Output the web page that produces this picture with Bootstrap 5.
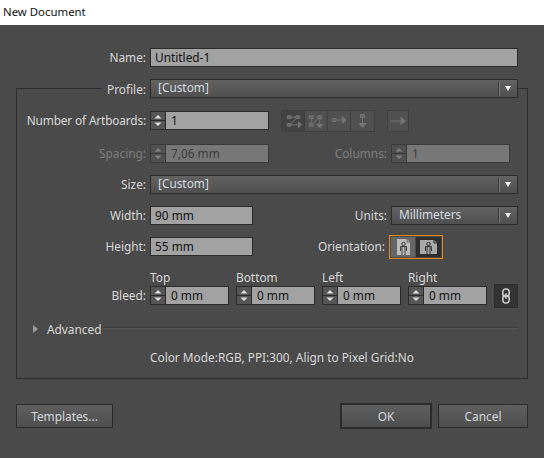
<!DOCTYPE html>
<html lang="en">
<head>
<meta charset="utf-8">
<title>New Document</title>
<link rel="stylesheet" href="https://cdn.jsdelivr.net/npm/bootstrap@5.3.0/dist/css/bootstrap.min.css">
<style>
html,body{height:100%}
body{background:#4a4a4a;color:#d8d8d8;font:11.85px/15px "Noto Sans",sans-serif;overflow:hidden}
.titlebar{height:25px;background:#fff;color:#111;padding:4px 3px;font-size:11.4px}
.dlg{padding:23px 16px 0}
.fr{height:19px;gap:0}
.fld-name{width:130px;margin-right:4px;text-align:right;flex:none;line-height:19px}
.frame-box{border:1px solid #2d2d2d;margin-top:21px;padding:0 9px 12px 0;height:291px}
.prof-row{margin-top:-10px;margin-left:85px;background:#4a4a4a}
.prof-row .fld-name{width:44px;margin-right:4px;line-height:20px}
.frame-box .body-name{width:129px;margin-right:4px;text-align:right;flex:none;line-height:19px}
.tight{letter-spacing:-.15px}
.mt13{margin-top:13px}.mt14{margin-top:14px}.mt12{margin-top:12px}.mt1px{margin-top:1px}.mt15{margin-top:15px}
.field-box{height:19px;border:1px solid #2b2b2b;background:#a2a2a2;color:#111;border-radius:0;padding:0 4px;line-height:17px;flex:none;min-height:0}
.me10{margin-right:10px}
.w103{width:103px}
.w119{width:119px}
.w127{width:127px}
.is-off-lbl{color:#7f7f7f}
.spin{display:flex;height:19px;border:1px solid #2b2b2b;background:#a2a2a2;color:#111;flex:none;line-height:17px}
.spin-b{width:15px;flex:none;background:#555;border-right:1px solid #2b2b2b;display:flex}
.spin span{padding-left:5px}
.spin.is-off{background:#777;color:#3c3c3c;border-color:#3a3a3a}
.spin.is-off .spin-b{background:#505050;border-color:#3a3a3a}
.w79{width:79px}
.me7{margin-right:7px}
.drop{height:19px;border:1px solid #2b2b2b;background:linear-gradient(#626262,#4f4f4f);color:#d4dce2;display:flex;align-items:center;padding-left:7px;line-height:15px;padding-bottom:3px;position:relative;flex:none}
.drop.grow{flex:1 1 auto}
.drop i{position:absolute;right:17px;top:1px;bottom:1px;width:2px;border-left:1px solid #3a3a3a;border-right:1px solid #777}
.drop b{position:absolute;right:6px;top:6px;width:0;height:0;border:3.5px solid transparent;border-top:5px solid #eee;border-bottom:0}
.r-lbl{flex:1 1 auto;text-align:right;margin-right:4px;line-height:19px}
.art-grp{display:flex;margin-left:12px;height:22px;border:1px solid #3f3f3f;flex:none}
.art-btn{width:23px;height:20px;background:#505050;border-right:1px solid #3f3f3f;display:block;flex:none}
.art-btn:last-child{border-right:0}
.art-btn.on{background:#424242}
.art-one{margin-left:12px;width:22px;height:22px;border:1px solid #3f3f3f;background:#505050;flex:none}
.orient{border:1px solid #e8861a;display:flex;height:24px;padding:1px;gap:1px;flex:none;margin-right:75px}
.orient svg{display:block}
.linkb{width:24px;height:24px;background:#333;border:1px solid #2c2c2c;flex:none;margin-left:7px}
.toplbl{height:15px;margin-left:133px;margin-top:14px}
.toplbl div{width:79px;margin-right:7px}
.tri{width:0;height:0;border:4px solid transparent;border-left:5px solid #999;border-right:0;margin:0 9px 0 16px;flex:none}
.rule{flex:1 1 auto;height:2px;background:#3a3a3a;border-bottom:1px solid #595959;margin-left:2px;margin-top:-2px}
.adv-row{height:18px}
.info-row{margin:10px 0 0 133px;height:18px;line-height:18px}
.dbtn{--bs-btn-padding-y:0;--bs-btn-padding-x:0;--bs-btn-font-size:11.85px;--bs-btn-border-radius:0;--bs-btn-color:#d4d8dc;--bs-btn-hover-color:#d4d8dc;--bs-btn-active-color:#d4d8dc;--bs-btn-border-color:#2b2b2b;height:24px;line-height:21px;background:linear-gradient(#5f5f5f,#4e4e4e);font-family:inherit}
.foot{margin-top:24px;height:26px}
.w97{width:97px}.w92{width:92px;height:26px;border-width:2px;line-height:21px}.w90{width:90px}
.ms6{margin-left:6px}
</style>
</head>
<body>
<div class="titlebar">New Document</div>
<div class="dlg">
  <div class="d-flex fr me10">
    <div class="fld-name">Name:</div>
    <div class="field-box flex-grow-1">Untitled-1</div>
  </div>

  <div class="frame-box">
    <div class="d-flex fr prof-row">
      <div class="fld-name">Profile:</div>
      <div class="drop grow">[Custom]<i></i><b></b></div>
    </div>

    <div class="d-flex fr align-items-center mt13">
      <div class="body-name tight">Number of Artboards:</div>
      <div class="spin w119"><div class="spin-b"><svg width="14" height="17" viewBox="0 0 14 17"><path d="M7 3l3.500 3.500h-7zM7 14l3.500-3.500h-7z" fill="#ddd"/><path d="M0 8.500h14" stroke="#2b2b2b"/></svg></div><span>1</span></div>
      <div class="art-grp">
        <svg class="art-btn on" viewBox="0 0 23 20" width="23" height="20" fill="none" stroke="#757575"><path d="M5.500 4.500h4v3h-4zM14.500 4.500h4v3h-4zM5.500 12.500h4v3h-4z" fill="#666"/><path d="M9.500 6h5M14.500 7.500l-5 5M9.500 14h8"/><path d="M17 11l3.500 3-3.500 3z" fill="#757575"/></svg>
        <svg class="art-btn" viewBox="0 0 23 20" width="23" height="20" fill="none" stroke="#757575"><path d="M4.500 4.500h4v3h-4zM13.500 4.500h4v3h-4zM4.500 12.500h4v3h-4z" fill="#666"/><path d="M6.500 7.500v5M13.500 7.500l-5 5M15.500 7.500v7"/><path d="M12 13.500h7l-3.500 3.500z" fill="#757575"/></svg>
        <svg class="art-btn" viewBox="0 0 23 20" width="23" height="20" fill="none" stroke="#757575"><path d="M4.500 7.500h4v3h-4z" fill="#666"/><path d="M8.500 9h8"/><path d="M15 5.500l4 3.500-4 3.500z" fill="#757575"/></svg>
        <svg class="art-btn" viewBox="0 0 23 20" width="23" height="20" fill="none" stroke="#757575"><path d="M9.500 3.500h4v3h-4z" fill="#666"/><path d="M11.500 6.500v7"/><path d="M8 12.500h7l-3.500 4z" fill="#757575"/></svg>
      </div>
      <svg class="art-one" viewBox="0 0 20 20" fill="none" stroke="#757575"><path d="M2.500 10h13"/><path d="M13 6.500l4.500 3.500-4.500 3.500z" fill="#757575"/></svg>
    </div>

    <div class="d-flex fr align-items-center mt14">
      <div class="body-name is-off-lbl">Spacing:</div>
      <div class="spin w119 is-off"><div class="spin-b"><svg width="14" height="17" viewBox="0 0 14 17"><path d="M7 3l3.500 3.500h-7zM7 14l3.500-3.500h-7z" fill="#808080"/><path d="M0 8.500h14" stroke="#3a3a3a"/></svg></div><span>7,06 mm</span></div>
      <div class="r-lbl is-off-lbl">Columns:</div>
      <div class="spin w119 is-off me-2"><div class="spin-b"><svg width="14" height="17" viewBox="0 0 14 17"><path d="M7 3l3.500 3.500h-7zM7 14l3.500-3.500h-7z" fill="#808080"/><path d="M0 8.500h14" stroke="#3a3a3a"/></svg></div><span>1</span></div>
    </div>

    <div class="d-flex fr mt12">
      <div class="body-name">Size:</div>
      <div class="drop grow">[Custom]<i></i><b></b></div>
    </div>

    <div class="d-flex fr mt12">
      <div class="body-name">Width:</div>
      <div class="field-box w103">90 mm</div>
      <div class="r-lbl">Units:</div>
      <div class="drop w127">Millimeters<i></i><b></b></div>
    </div>

    <div class="d-flex fr align-items-center mt12">
      <div class="body-name">Height:</div>
      <div class="field-box w103">55 mm</div>
      <div class="r-lbl">Orientation:</div>
      <div class="orient">
        <svg width="24" height="20" viewBox="0 0 24 20"><rect width="24" height="20" fill="#666"/><path d="M6 2h10l3 3v13H6z" fill="#bcbcbc"/><path d="M16 2v3h3" fill="none" stroke="#666"/><circle cx="12.500" cy="7" r="1.700" fill="none" stroke="#333"/><path d="M9.500 14v-4.500h6V14M11 18V9.500M14 18V9.500" fill="none" stroke="#333" stroke-width=".9"/></svg>
        <svg width="25" height="20" viewBox="0 0 25 20"><rect width="25" height="20" fill="#2e2e2e"/><path d="M4 3h14l3 3v11H4z" fill="#a8a8a8"/><path d="M18 3v3h3" fill="none" stroke="#2e2e2e"/><circle cx="12.500" cy="7" r="1.700" fill="none" stroke="#2a2a2a"/><path d="M9.500 14V9.500h6V14M11 17V9.500M14 17V9.500" fill="none" stroke="#2a2a2a" stroke-width=".9"/></svg>
      </div>
    </div>

    <div class="d-flex toplbl">
      <div>Top</div><div>Bottom</div><div>Left</div><div>Right</div>
    </div>
    <div class="d-flex fr align-items-center mt1px">
      <div class="body-name">Bleed:</div>
      <div class="spin w79 me7"><div class="spin-b"><svg width="14" height="17" viewBox="0 0 14 17"><path d="M7 3l3.500 3.500h-7zM7 14l3.500-3.500h-7z" fill="#ddd"/><path d="M0 8.500h14" stroke="#2b2b2b"/></svg></div><span>0 mm</span></div>
      <div class="spin w79 me7"><div class="spin-b"><svg width="14" height="17" viewBox="0 0 14 17"><path d="M7 3l3.500 3.500h-7zM7 14l3.500-3.500h-7z" fill="#ddd"/><path d="M0 8.500h14" stroke="#2b2b2b"/></svg></div><span>0 mm</span></div>
      <div class="spin w79 me7"><div class="spin-b"><svg width="14" height="17" viewBox="0 0 14 17"><path d="M7 3l3.500 3.500h-7zM7 14l3.500-3.500h-7z" fill="#ddd"/><path d="M0 8.500h14" stroke="#2b2b2b"/></svg></div><span>0 mm</span></div>
      <div class="spin w79"><div class="spin-b"><svg width="14" height="17" viewBox="0 0 14 17"><path d="M7 3l3.500 3.500h-7zM7 14l3.500-3.500h-7z" fill="#ddd"/><path d="M0 8.500h14" stroke="#2b2b2b"/></svg></div><span>0 mm</span></div>
      <svg class="linkb" viewBox="0 0 22 22" fill="none" stroke="#c8c8c8" stroke-width="1.600"><rect x="7.800" y="4" width="6.400" height="7.800" rx="3"/><rect x="7.800" y="10.200" width="6.400" height="7.800" rx="3"/><path d="M11 8v6" stroke="#c8c8c8" stroke-width="1.200"/></svg>
    </div>

    <div class="d-flex adv-row align-items-center mt15">
      <div class="tri"></div>
      <div>Advanced</div>
      <div class="rule"></div>
    </div>
    <div class="info-row">Color Mode:RGB, PPI:300, Align to Pixel Grid:No</div>
  </div>

  <div class="d-flex foot align-items-center">
    <button type="button" class="btn dbtn w97">Templates...</button>
    <button type="button" class="btn dbtn w92 ms-auto">OK</button>
    <button type="button" class="btn dbtn w90 ms6">Cancel</button>
  </div>
</div>
<script src="https://cdn.jsdelivr.net/npm/bootstrap@5.3.0/dist/js/bootstrap.bundle.min.js"></script>
</body>
</html>
